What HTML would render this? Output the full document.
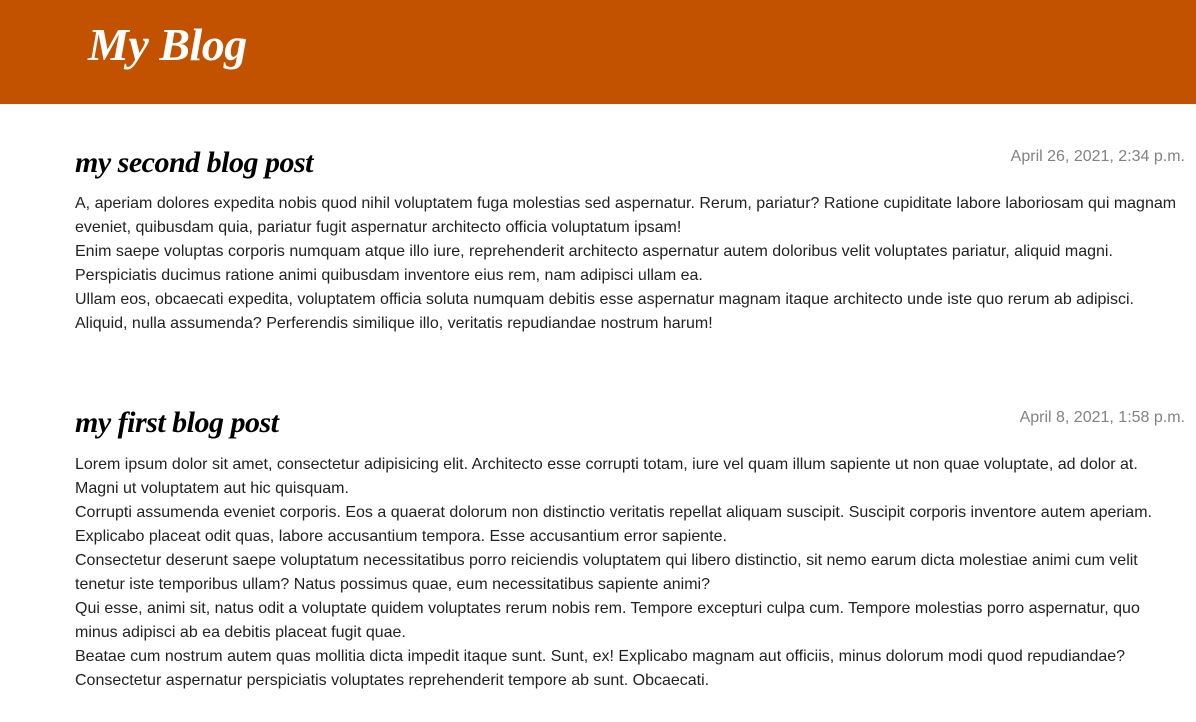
<!DOCTYPE html>
<html><head><meta charset="utf-8"><style>
body{margin:0;width:1196px;height:722px;overflow:hidden;background:#fff;font-family:"Liberation Sans",sans-serif;position:relative}
.hdr{position:absolute;left:0;top:0;width:1196px;height:104px;background:#c25100}
.hdr h1{position:absolute;left:88px;top:18px;margin:0;color:#fff;font-family:"Liberation Serif",serif;font-style:italic;font-weight:bold;font-size:46px;letter-spacing:-0.5px}
.t{position:absolute;left:75px;margin:0;font-family:"Liberation Serif",serif;font-style:italic;font-weight:bold;font-size:30px;color:#000;letter-spacing:-0.5px;white-space:nowrap}
.d{position:absolute;right:11px;font-size:16px;color:#828282;white-space:nowrap}
.p{position:absolute;left:75px;margin:0;font-size:16px;line-height:24px;color:#222;white-space:nowrap}
</style></head><body>
<div class="hdr"><h1>My Blog</h1></div>
<div class="d" style="top:148px">April 26, 2021, 2:34 p.m.</div>
<h2 class="t" style="top:146px">my second blog post</h2>
<p class="p" style="top:192px">A, aperiam dolores expedita nobis quod nihil voluptatem fuga molestias sed aspernatur. Rerum, pariatur? Ratione cupiditate labore laboriosam qui magnam<br>eveniet, quibusdam quia, pariatur fugit aspernatur architecto officia voluptatum ipsam!<br>Enim saepe voluptas corporis numquam atque illo iure, reprehenderit architecto aspernatur autem doloribus velit voluptates pariatur, aliquid magni.<br>Perspiciatis ducimus ratione animi quibusdam inventore eius rem, nam adipisci ullam ea.<br>Ullam eos, obcaecati expedita, voluptatem officia soluta numquam debitis esse aspernatur magnam itaque architecto unde iste quo rerum ab adipisci.<br>Aliquid, nulla assumenda? Perferendis similique illo, veritatis repudiandae nostrum harum!</p>
<div class="d" style="top:409px">April 8, 2021, 1:58 p.m.</div>
<h2 class="t" style="top:406px">my first blog post</h2>
<p class="p" style="top:453px">Lorem ipsum dolor sit amet, consectetur adipisicing elit. Architecto esse corrupti totam, iure vel quam illum sapiente ut non quae voluptate, ad dolor at.<br>Magni ut voluptatem aut hic quisquam.<br>Corrupti assumenda eveniet corporis. Eos a quaerat dolorum non distinctio veritatis repellat aliquam suscipit. Suscipit corporis inventore autem aperiam.<br>Explicabo placeat odit quas, labore accusantium tempora. Esse accusantium error sapiente.<br>Consectetur deserunt saepe voluptatum necessitatibus porro reiciendis voluptatem qui libero distinctio, sit nemo earum dicta molestiae animi cum velit<br>tenetur iste temporibus ullam? Natus possimus quae, eum necessitatibus sapiente animi?<br>Qui esse, animi sit, natus odit a voluptate quidem voluptates rerum nobis rem. Tempore excepturi culpa cum. Tempore molestias porro aspernatur, quo<br>minus adipisci ab ea debitis placeat fugit quae.<br>Beatae cum nostrum autem quas mollitia dicta impedit itaque sunt. Sunt, ex! Explicabo magnam aut officiis, minus dolorum modi quod repudiandae?<br>Consectetur aspernatur perspiciatis voluptates reprehenderit tempore ab sunt. Obcaecati.</p>
</body></html>
